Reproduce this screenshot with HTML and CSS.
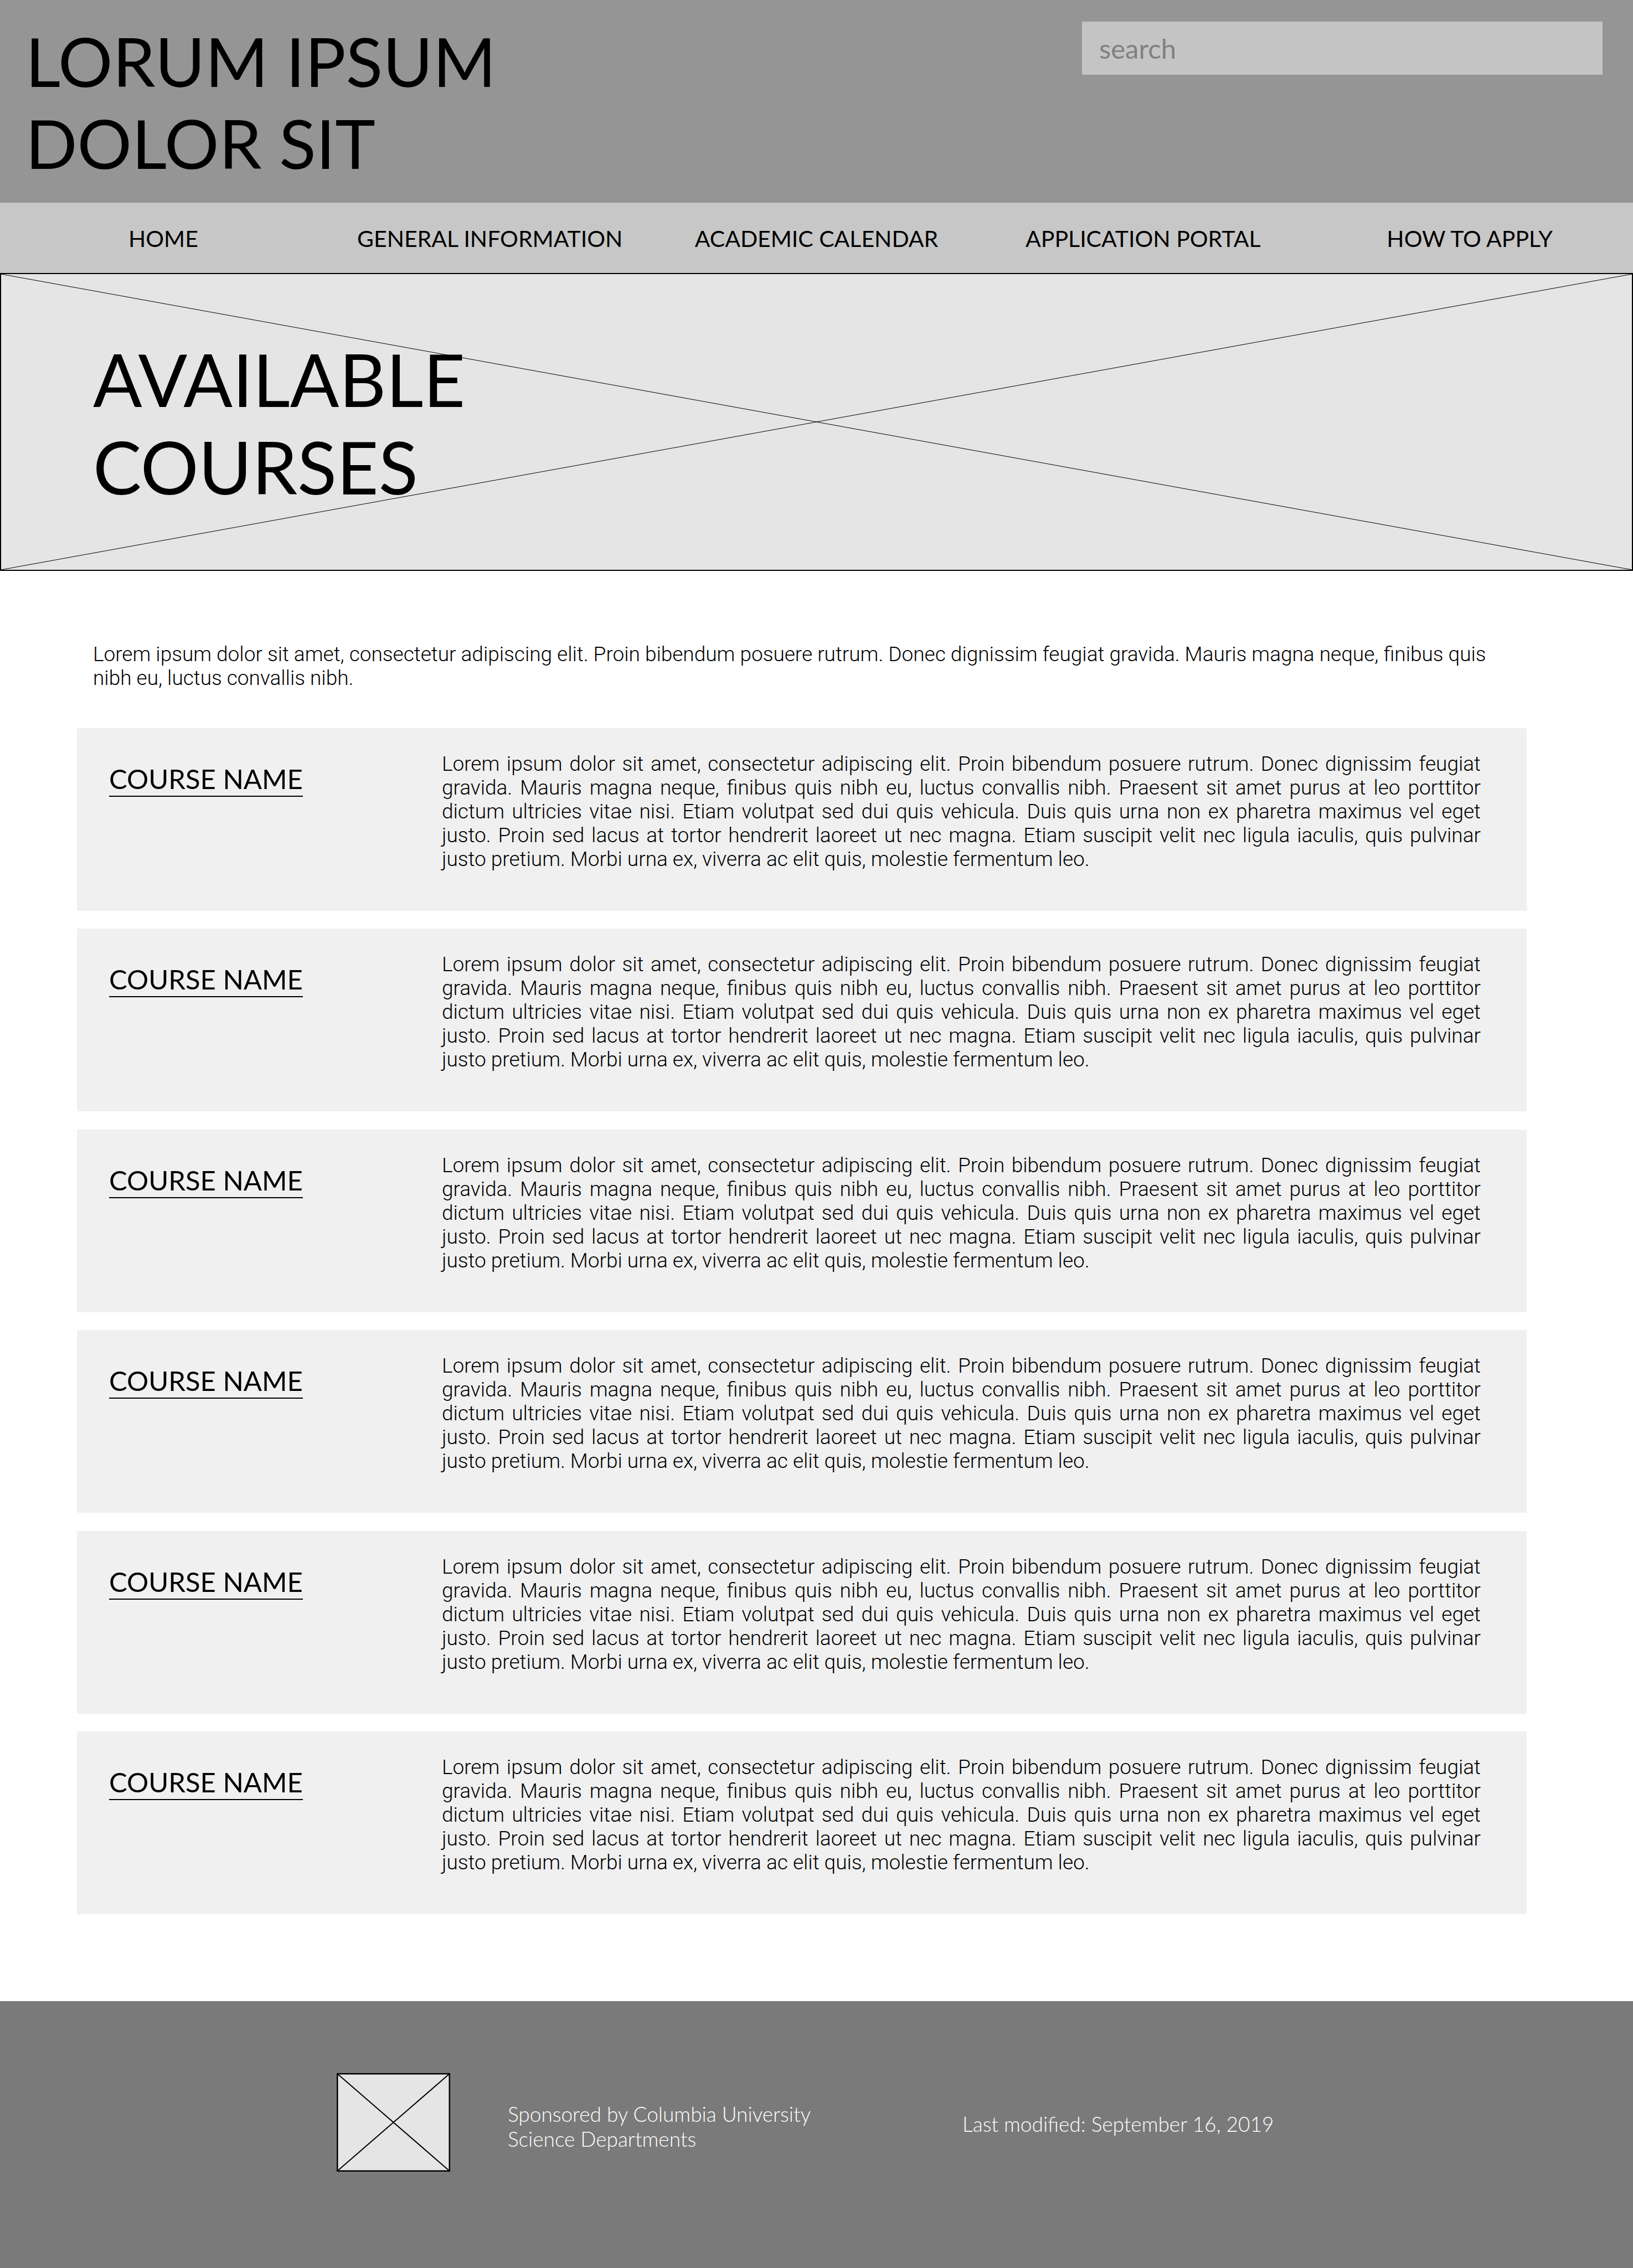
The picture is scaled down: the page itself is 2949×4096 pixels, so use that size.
FILE: index.html
```html
<!DOCTYPE html>
<html lang="en">
<head>
<meta charset="utf-8">
<meta name="viewport" content="width=device-width, initial-scale=1">
<title>Available Courses</title>
<link rel="stylesheet" href="styles.css">
</head>
<body>
<header class="site-header">
  <p class="site-title">LORUM IPSUM<br>DOLOR SIT</p>
  <form class="search" role="search">
    <input class="search-input" type="search" name="q" placeholder="search" aria-label="search">
  </form>
</header>
<nav class="site-nav">
  <a class="nav-link" href="#">HOME</a>
  <a class="nav-link" href="#">GENERAL INFORMATION</a>
  <a class="nav-link" href="#">ACADEMIC CALENDAR</a>
  <a class="nav-link" href="#">APPLICATION PORTAL</a>
  <a class="nav-link" href="#">HOW TO APPLY</a>
</nav>
<section class="hero">
  <svg class="hero-cross" viewBox="0 0 100 100" preserveAspectRatio="none" aria-hidden="true"><path d="M0 0L100 100M100 0L0 100"/></svg>
  <h1 class="hero-title">AVAILABLE<br>COURSES</h1>
</section>
<main class="content">
  <p class="intro">Lorem ipsum dolor sit amet, consectetur adipiscing elit. Proin bibendum posuere rutrum. Donec dignissim feugiat gravida. Mauris magna neque, finibus quis nibh eu, luctus convallis nibh.</p>
  <div class="courses">
    <article class="course">
      <h2 class="course-heading"><a class="course-link" href="#">COURSE NAME</a></h2>
      <p class="course-text">Lorem ipsum dolor sit amet, consectetur adipiscing elit. Proin bibendum posuere rutrum. Donec dignissim feugiat gravida. Mauris magna neque, finibus quis nibh eu, luctus convallis nibh. Praesent sit amet purus at leo porttitor dictum ultricies vitae nisi. Etiam volutpat sed dui quis vehicula. Duis quis urna non ex pharetra maximus vel eget justo. Proin sed lacus at tortor hendrerit laoreet ut nec magna. Etiam suscipit velit nec ligula iaculis, quis pulvinar justo pretium. Morbi urna ex, viverra ac elit quis, molestie fermentum leo.</p>
    </article>
    <article class="course">
      <h2 class="course-heading"><a class="course-link" href="#">COURSE NAME</a></h2>
      <p class="course-text">Lorem ipsum dolor sit amet, consectetur adipiscing elit. Proin bibendum posuere rutrum. Donec dignissim feugiat gravida. Mauris magna neque, finibus quis nibh eu, luctus convallis nibh. Praesent sit amet purus at leo porttitor dictum ultricies vitae nisi. Etiam volutpat sed dui quis vehicula. Duis quis urna non ex pharetra maximus vel eget justo. Proin sed lacus at tortor hendrerit laoreet ut nec magna. Etiam suscipit velit nec ligula iaculis, quis pulvinar justo pretium. Morbi urna ex, viverra ac elit quis, molestie fermentum leo.</p>
    </article>
    <article class="course">
      <h2 class="course-heading"><a class="course-link" href="#">COURSE NAME</a></h2>
      <p class="course-text">Lorem ipsum dolor sit amet, consectetur adipiscing elit. Proin bibendum posuere rutrum. Donec dignissim feugiat gravida. Mauris magna neque, finibus quis nibh eu, luctus convallis nibh. Praesent sit amet purus at leo porttitor dictum ultricies vitae nisi. Etiam volutpat sed dui quis vehicula. Duis quis urna non ex pharetra maximus vel eget justo. Proin sed lacus at tortor hendrerit laoreet ut nec magna. Etiam suscipit velit nec ligula iaculis, quis pulvinar justo pretium. Morbi urna ex, viverra ac elit quis, molestie fermentum leo.</p>
    </article>
    <article class="course">
      <h2 class="course-heading"><a class="course-link" href="#">COURSE NAME</a></h2>
      <p class="course-text">Lorem ipsum dolor sit amet, consectetur adipiscing elit. Proin bibendum posuere rutrum. Donec dignissim feugiat gravida. Mauris magna neque, finibus quis nibh eu, luctus convallis nibh. Praesent sit amet purus at leo porttitor dictum ultricies vitae nisi. Etiam volutpat sed dui quis vehicula. Duis quis urna non ex pharetra maximus vel eget justo. Proin sed lacus at tortor hendrerit laoreet ut nec magna. Etiam suscipit velit nec ligula iaculis, quis pulvinar justo pretium. Morbi urna ex, viverra ac elit quis, molestie fermentum leo.</p>
    </article>
    <article class="course">
      <h2 class="course-heading"><a class="course-link" href="#">COURSE NAME</a></h2>
      <p class="course-text">Lorem ipsum dolor sit amet, consectetur adipiscing elit. Proin bibendum posuere rutrum. Donec dignissim feugiat gravida. Mauris magna neque, finibus quis nibh eu, luctus convallis nibh. Praesent sit amet purus at leo porttitor dictum ultricies vitae nisi. Etiam volutpat sed dui quis vehicula. Duis quis urna non ex pharetra maximus vel eget justo. Proin sed lacus at tortor hendrerit laoreet ut nec magna. Etiam suscipit velit nec ligula iaculis, quis pulvinar justo pretium. Morbi urna ex, viverra ac elit quis, molestie fermentum leo.</p>
    </article>
    <article class="course">
      <h2 class="course-heading"><a class="course-link" href="#">COURSE NAME</a></h2>
      <p class="course-text">Lorem ipsum dolor sit amet, consectetur adipiscing elit. Proin bibendum posuere rutrum. Donec dignissim feugiat gravida. Mauris magna neque, finibus quis nibh eu, luctus convallis nibh. Praesent sit amet purus at leo porttitor dictum ultricies vitae nisi. Etiam volutpat sed dui quis vehicula. Duis quis urna non ex pharetra maximus vel eget justo. Proin sed lacus at tortor hendrerit laoreet ut nec magna. Etiam suscipit velit nec ligula iaculis, quis pulvinar justo pretium. Morbi urna ex, viverra ac elit quis, molestie fermentum leo.</p>
    </article>
  </div>
</main>
<footer class="site-footer">
  <svg class="footer-logo" viewBox="0 0 205 178" role="img" aria-label="Sponsor logo"><rect class="logo-box" x="1" y="1" width="203" height="176"/><path class="logo-cross" d="M1 1L204 177M204 1L1 177"/></svg>
  <p class="sponsor">Sponsored by Columbia University<br>Science Departments</p>
  <p class="modified">Last modified: September 16, 2019</p>
</footer>
</body>
</html>
```

FILE: styles.css
```css
* {
  box-sizing: border-box;
}

body {
  display: flex;
  flex-direction: column;
  min-height: 100vh;
  margin: 0;
  background: #fff;
  color: #000;
  font-family: Lato, sans-serif;
}

h1,
h2,
p {
  margin: 0;
  font-weight: 400;
}

a {
  color: inherit;
  text-decoration: none;
}

/* Header */
.site-header {
  display: flex;
  justify-content: space-between;
  align-items: flex-start;
  padding: 36px 55px 34px 46px;
  background: #959595;
}

.site-title {
  font-size: 123px;
  line-height: 148px;
}

.search {
  width: 940px;
  padding-top: 3px;
}

.search-input {
  display: block;
  width: 100%;
  height: 96px;
  margin: 0;
  padding: 0 31px;
  border: 0;
  border-radius: 0;
  background: #c4c4c4;
  color: #000;
  font-family: inherit;
  font-size: 49px;
  appearance: none;
}

.search-input::placeholder {
  color: #808080;
  opacity: 1;
}

/* Navigation */
.site-nav {
  display: grid;
  grid-template-columns: repeat(5, 1fr);
  padding: 40px 0 38px;
  background: #c7c7c7;
}

.nav-link {
  font-size: 41px;
  line-height: 49px;
  text-align: center;
}

/* Hero */
.hero {
  position: relative;
  padding: 111px 166px 107px;
  border: 2px solid #000;
  background: #e5e5e5;
}

.hero-cross {
  position: absolute;
  inset: 0;
  width: 100%;
  height: 100%;
}

.hero-cross path {
  fill: none;
  stroke: #000;
  stroke-width: 1px;
  vector-effect: non-scaling-stroke;
}

.hero-title {
  position: relative;
  font-size: 131px;
  line-height: 158px;
}

/* Course list */
.content {
  padding: 129px 192px 157px 139px;
}

.intro {
  padding: 0 58px 0 29px;
  margin-bottom: 69px;
  font-family: "Roboto Light", Roboto, sans-serif;
  font-size: 37px;
  font-weight: 300;
  line-height: 43px;
}

.courses {
  display: grid;
  gap: 1.1vw;
}

.course {
  display: grid;
  grid-template-columns: 601px 1fr;
  align-items: start;
  padding: 43px 83px 72px 58px;
  background: #f0f0f0;
}

.course-heading {
  padding-top: 19px;
  font-size: 49px;
  line-height: 59px;
}

.course-link {
  display: inline-block;
  padding-bottom: 1px;
  border-bottom: 2px solid #000;
}

.course-text {
  font-family: "Roboto Light", Roboto, sans-serif;
  font-size: 37px;
  font-weight: 300;
  line-height: 43px;
  text-align: justify;
}

/* Footer */
.site-footer {
  display: grid;
  flex: 1;
  grid-template-columns: 205px 717px auto;
  column-gap: 104px;
  align-items: start;
  padding: 130px 55px 119px 608px;
  background: #7a7a7a;
  color: #fff;
  font-family: "Lato Light", Lato, sans-serif;
  font-size: 37px;
  font-weight: 300;
  line-height: 45px;
}

.footer-logo {
  width: 205px;
  height: 178px;
}

.logo-box {
  fill: #e5e5e5;
  stroke: #000;
  stroke-width: 3px;
}

.logo-cross {
  fill: none;
  stroke: #000;
  stroke-width: 2px;
}

.sponsor {
  padding-top: 51px;
}

.modified {
  padding-top: 69px;
}
```
